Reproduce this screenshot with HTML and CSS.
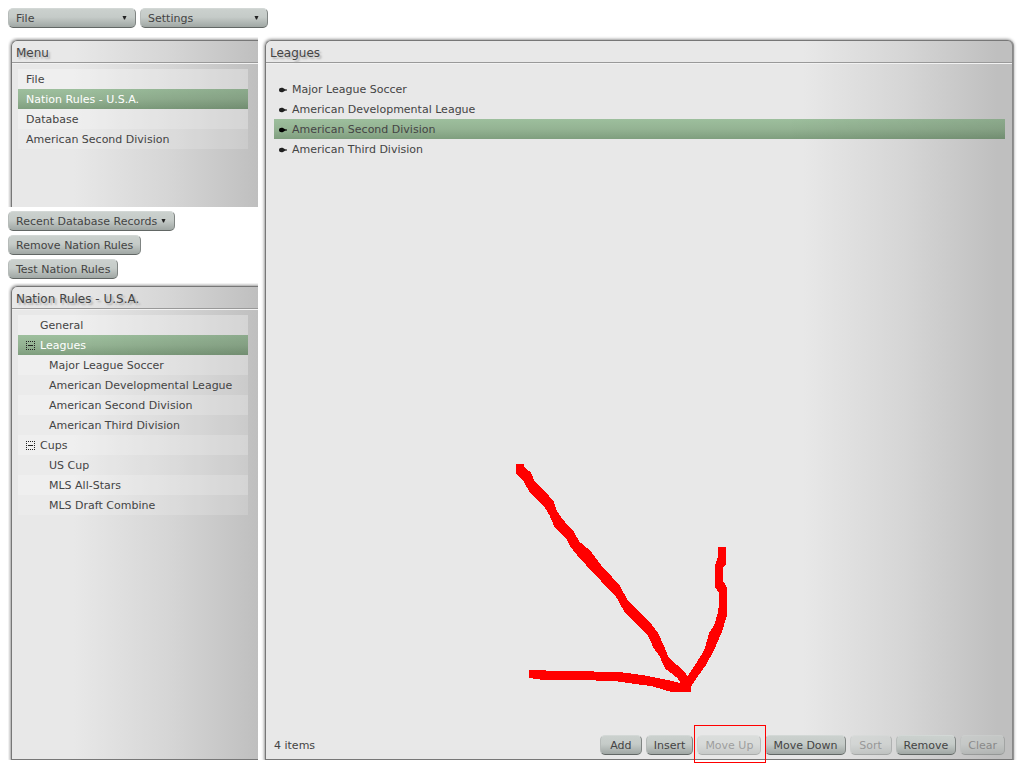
FILE: index.html
```html
<!DOCTYPE html>
<html lang="en">
<head>
<meta charset="utf-8">
<title>Nation Rules - U.S.A.</title>
<link rel="stylesheet" href="styles.css">
</head>
<body>
<svg class="defs" width="0" height="0" aria-hidden="true">
  <symbol id="caret" viewBox="0 0 5 4"><path d="M.5 0H4.500L3 3.500H2Z"/></symbol>
  <symbol id="bullet" viewBox="0 0 8 6"><path d="M0 3C0 1.500 1 .8 2.500 .8C4 .8 5 1.500 6 2.300L8 2.600V3.400L6 3.700C5 4.500 4 5.200 2.500 5.200C1 5.200 0 4.500 0 3Z"/></symbol>
  <symbol id="minus" viewBox="0 0 9 9"><path d="M0 .5H9M0 8.500H9M.5 0V9M8.500 0V9" stroke="#222" stroke-dasharray="1 1"/><path d="M2 4.500H7" stroke="#222"/></symbol>
</svg>
<div class="app">
  <header class="toolbar">
    <label class="dropdown wide"><select class="button" aria-label="File"><option>File</option></select><svg class="caret"><use href="#caret"/></svg></label>
    <label class="dropdown wide"><select class="button" aria-label="Settings"><option>Settings</option></select><svg class="caret"><use href="#caret"/></svg></label>
  </header>
  <div class="columns">
    <aside class="sidebar">
      <div class="clip menu-clip">
        <section class="panel">
          <h2 class="title">Menu</h2>
          <ul class="list">
            <li><a class="row" href="#file">File</a></li>
            <li><a class="row selected" href="#nation">Nation Rules - U.S.A.</a></li>
            <li><a class="row" href="#database">Database</a></li>
            <li><a class="row" href="#second">American Second Division</a></li>
          </ul>
        </section>
      </div>
      <div class="actions">
        <label class="dropdown recent"><select class="button" aria-label="Recent Database Records"><option>Recent Database Records</option></select><svg class="caret"><use href="#caret"/></svg></label>
        <button class="button" type="button">Remove Nation Rules</button>
        <button class="button" type="button">Test Nation Rules</button>
      </div>
      <div class="clip tree-clip">
        <section class="panel">
          <h2 class="title">Nation Rules - U.S.A.</h2>
          <ul class="list tree">
            <li><a class="row branch" href="#general"><span class="toggle"></span>General</a></li>
            <li><a class="row branch selected" href="#leagues"><svg class="toggle"><use href="#minus"/></svg>Leagues</a></li>
            <li><a class="row leaf" href="#mls">Major League Soccer</a></li>
            <li><a class="row leaf" href="#adl">American Developmental League</a></li>
            <li><a class="row leaf" href="#asd">American Second Division</a></li>
            <li><a class="row leaf" href="#atd">American Third Division</a></li>
            <li><a class="row branch" href="#cups"><svg class="toggle"><use href="#minus"/></svg>Cups</a></li>
            <li><a class="row leaf" href="#uscup">US Cup</a></li>
            <li><a class="row leaf" href="#allstars">MLS All-Stars</a></li>
            <li><a class="row leaf" href="#combine">MLS Draft Combine</a></li>
          </ul>
        </section>
      </div>
    </aside>
    <main class="main">
      <section class="panel main-panel">
        <h1 class="title">Leagues</h1>
        <ul class="leagues">
          <li><a class="league" href="#l1"><svg class="bullet"><use href="#bullet"/></svg>Major League Soccer</a></li>
          <li><a class="league" href="#l2"><svg class="bullet"><use href="#bullet"/></svg>American Developmental League</a></li>
          <li><a class="league current" href="#l3"><svg class="bullet"><use href="#bullet"/></svg>American Second Division</a></li>
          <li><a class="league" href="#l4"><svg class="bullet"><use href="#bullet"/></svg>American Third Division</a></li>
        </ul>
        <footer class="footer">
          <span class="count">4 items</span>
          <button class="button" type="button">Add</button>
          <button class="button" type="button">Insert</button>
          <span class="marked">
            <button class="button" type="button" disabled>Move Up</button>
            <svg class="arrow" viewBox="0 0 780 750" shape-rendering="crispEdges" aria-hidden="true"><path fill="#f00" d="M45 42H69V50L90 68L100 92L135 127L158 155L168 183L185 208L218 245L235 275L268 302L300 345L355 405L380 450L445 515L470 547L490 590L502 622L545 660L560 678L585 640L610 600L625 547L640 525L652 482L655 430L642 412V345L651 320V291H675V345L667 350V395L678 412V495L663 545L640 598L615 645L590 680L570 710V725H508L450 708L410 703L335 692L128 690L84 684V660L150 662L355 666L430 676L500 690L540 700L530 685L492 655L475 617L458 595L443 560L370 485L345 440L280 372L230 318L205 285L195 265L160 230L145 195L130 170L85 125L65 90L45 72Z"/></svg>
          </span>
          <button class="button" type="button">Move Down</button>
          <button class="button" type="button" disabled>Sort</button>
          <button class="button" type="button">Remove</button>
          <button class="button" type="button" disabled>Clear</button>
        </footer>
      </section>
    </main>
  </div>
</div>
</body>
</html>
```
FILE: styles.css
```css
* { box-sizing: border-box; }
body {
  margin: 0;
  background: #fff;
  color: #444;
  font: 11px/20px "DejaVu Sans", sans-serif;
}
ul { list-style: none; margin: 0; padding: 0; }
a { color: inherit; text-decoration: none; }
.defs { position: absolute; }
.app {
  display: flex;
  flex-direction: column;
  min-height: 100vh;
  padding: 8px;
}
.toolbar { display: flex; gap: 4px; }
.columns { display: flex; flex: 1; gap: 4px; padding-top: 9px; }
.sidebar { display: flex; flex-direction: column; flex: 0 0 250px; }

.button {
  appearance: none;
  height: 20px;
  min-width: 42px;
  margin: 0;
  padding: 2px 7px 0;
  border: 1px solid;
  border-color: #d3d8d6 #7f8482 #626765 #b6bbb9;
  border-radius: 5px;
  background: linear-gradient(#cbd1ce, #c5cbc8 45%, #a0a7a4);
  color: #444;
  font: inherit;
  line-height: 16px;
  white-space: nowrap;
}
.button:disabled { opacity: 0.45; color: #444; }
.dropdown { position: relative; display: block; }
.dropdown .button { display: block; width: 100%; }
.wide { width: 128px; }
.recent { width: 167px; }
.caret {
  position: absolute;
  right: 9px;
  top: 8px;
  width: 5px;
  height: 4px;
  fill: #222;
  pointer-events: none;
}
.actions {
  display: flex;
  flex-direction: column;
  align-items: flex-start;
  gap: 4px;
  padding: 4px 0;
}

.clip, .main { display: flex; padding: 3px 0 0 3px; }
.clip { overflow: hidden; }
.menu-clip { height: 170px; }
.tree-clip { flex: 1; }
.main { flex: 1; padding-right: 3px; }
.panel {
  position: relative;
  flex: 1;
  border: 1px solid #777;
  border-right: 0;
  border-radius: 6px 0 0 0;
  background: linear-gradient(90deg, #e8e8e8 25%, #d5d5d5 65%, #bfbfbf);
}
/* Soft outer edge, cut off level with the bottom border */
.panel::before {
  content: "";
  position: absolute;
  inset: -1px;
  border-radius: inherit;
  box-shadow: 0 0 3px 1px #999;
  clip-path: inset(-5px -5px 0);
  pointer-events: none;
}
.menu-clip .panel { border-bottom: 0; }
.main-panel {
  display: flex;
  flex-direction: column;
  margin-right: -1px;
  border-right: 2px solid #888;
  border-radius: 6px 6px 0 0;
  background: linear-gradient(90deg, #e8e8e8 72%, #d5d5d5 86%, #bfbfbf 98%);
}
.title {
  height: 22px;
  margin: 0;
  padding: 2px 4px 0;
  border-bottom: 1px solid #999;
  box-shadow: 0 1px #f2f2f2;
  font-size: 12px;
  font-weight: normal;
  line-height: 20px;
  text-shadow: 2px 2px 2px #aaa;
}
.list { margin: 6px 10px 0 6px; }
.row, .league { display: flex; align-items: center; height: 20px; padding-top: 2px; }
.row { padding-left: 8px; }
.list li:nth-child(odd) { background: rgba(255, 255, 255, 0.3); }
.list li:nth-child(even) { background: rgba(255, 255, 255, 0.16); }
.toggle { width: 9px; height: 9px; margin: 0 5px 1px 0; }
.leaf { padding-left: 31px; }
.selected, .current {
  background:
    linear-gradient(90deg, transparent 30%, rgba(0, 0, 0, 0.11)),
    linear-gradient(#9dbf9d, #94b393 50%, #7f9e7e);
}
.current {
  background:
    linear-gradient(90deg, transparent 70%, rgba(0, 0, 0, 0.11)),
    linear-gradient(#9dbf9d, #94b393 50%, #7f9e7e);
}
.selected { color: #fff; }
.leagues { flex: 1; padding: 16px 7px 0 8px; }
.league { padding-left: 5px; }
.bullet { width: 8px; height: 6px; margin: 0 5px 0 0; fill: #222; }
.current .bullet { fill: #000; }
.footer { display: flex; align-items: center; gap: 4px; padding: 0 7px 4px 8px; }
.count { flex: 1; padding-top: 2px; line-height: 18px; }
.marked { position: relative; display: flex; }
.marked::after {
  content: "";
  position: absolute;
  inset: -10px -5px -8px -3px;
  border: 1px solid #f00;
  pointer-events: none;
}
.arrow {
  position: absolute;
  right: 0;
  bottom: 55px;
  width: 260px;
  height: 250px;
  pointer-events: none;
}
```
